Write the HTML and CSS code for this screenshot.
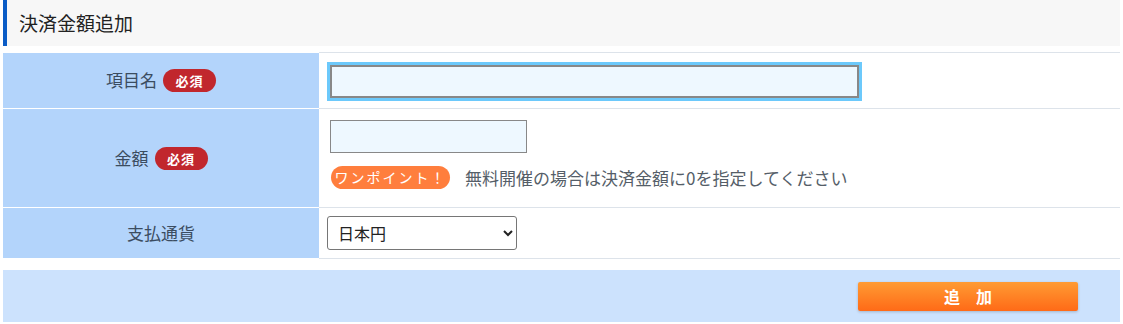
FILE: index.html
```html
<!DOCTYPE html>
<html lang="ja">
<head>
  <meta charset="UTF-8">
  <meta name="viewport" content="width=device-width, initial-scale=1.0">
  <title>決済金額追加</title>
  <link rel="stylesheet" href="styles.css">
</head>
<body>

  <div class="wrap">
    <h2 class="title">決済金額追加</h2>

    <table class="form-table">
      <tr class="row-name">
        <th>項目名<span class="req">必須</span></th>
        <td><input type="text" class="input-long focus"></td>
      </tr>
      <tr class="row-price">
        <th>金額<span class="req">必須</span></th>
        <td>
          <input type="text" class="input-short">
          <div class="hint">
            <span class="point">ワンポイント！</span>
            <span class="hint-text">無料開催の場合は決済金額に0を指定してください</span>
          </div>
        </td>
      </tr>
      <tr class="row-currency">
        <th>支払通貨</th>
        <td>
          <select class="currency">
            <option>日本円</option>
            <option>米ドル</option>
          </select>
        </td>
      </tr>
    </table>

    <div class="footer">
      <button class="btn-add">追　加</button>
    </div>
  </div>

</body>
</html>
```

FILE: styles.css
```css
body {
  margin: 0;
  font-family: "Noto Sans CJK JP", "Noto Sans", sans-serif;
  background: #fff;
  color: #222;
}

.wrap {
  margin: 0 3px;
}

.title {
  margin: 0 0 6px;
  height: 46px;
  line-height: 46px;
  padding-left: 12px;
  background: #f7f7f7;
  border-left: 4px solid #0b5cc6;
  font-size: 19px;
  font-weight: normal;
  color: #222;
}

.form-table {
  width: 100%;
  border-collapse: collapse;
}

.form-table th {
  width: 316px;
  padding: 0;
  background: #b3d4fb;
  border-top: 1px solid #fff;
  border-bottom: 1px solid #fff;
  font-size: 17px;
  line-height: 1.3;
  font-weight: normal;
  color: #3b4c60;
  text-align: center;
}

.form-table td {
  padding: 0 0 0 8px;
  border-top: 1px solid #dde3ea;
  border-bottom: 1px solid #dde3ea;
}

.row-name th, .row-name td {
  height: 55px;
}

.row-price td {
  padding-top: 11px;
  padding-bottom: 18px;
}

.row-currency th, .row-currency td {
  height: 50px;
}

.req {
  display: inline-block;
  margin-left: 6px;
  width: 53px;
  height: 23px;
  line-height: 23px;
  border-radius: 12px;
  background: #c1272d;
  color: #fff;
  font-size: 13px;
  font-weight: bold;
  letter-spacing: 1px;
  vertical-align: 1px;
}

input[type="text"] {
  display: block;
  box-sizing: border-box;
  margin-left: 3px;
  height: 33px;
  background: #eef8ff;
  border: 1px solid #888;
  font-size: 16px;
}

.input-long {
  width: 529px;
}

.input-long.focus {
  border: 2px solid #888;
  box-shadow: 0 0 0 3px #6cc9fb;
  margin-top: 1px;
}

.input-short {
  width: 197px;
}

.hint {
  display: flex;
  align-items: center;
  margin-top: 13px;
  margin-left: 4px;
  line-height: 23px;
}

.point {
  display: inline-block;
  width: 119px;
  height: 23px;
  line-height: 23px;
  border-radius: 12px;
  background: #ff7e3d;
  color: #fff;
  font-size: 14px;
  letter-spacing: 2px;
  text-align: center;
}

.hint-text {
  margin-left: 15px;
  font-size: 17px;
  color: #555e68;
}

.currency {
  width: 190px;
  height: 34px;
  padding: 0 6px;
  background: #fff;
  border: 1px solid #767676;
  border-radius: 3px;
  font-family: inherit;
  font-size: 16px;
  color: #222;
}

.footer {
  display: flex;
  justify-content: flex-end;
  align-items: center;
  margin-top: 11px;
  height: 52px;
  padding-right: 42px;
  background: #cce2fd;
}

.btn-add {
  width: 220px;
  height: 29px;
  border: none;
  border-radius: 2px;
  background: linear-gradient(#ff9b33, #ff6a17);
  box-shadow: 0 1px 3px rgba(0, 0, 0, 0.2);
  color: #fff;
  font-family: inherit;
  font-size: 16px;
  font-weight: bold;
  cursor: pointer;
}
```
